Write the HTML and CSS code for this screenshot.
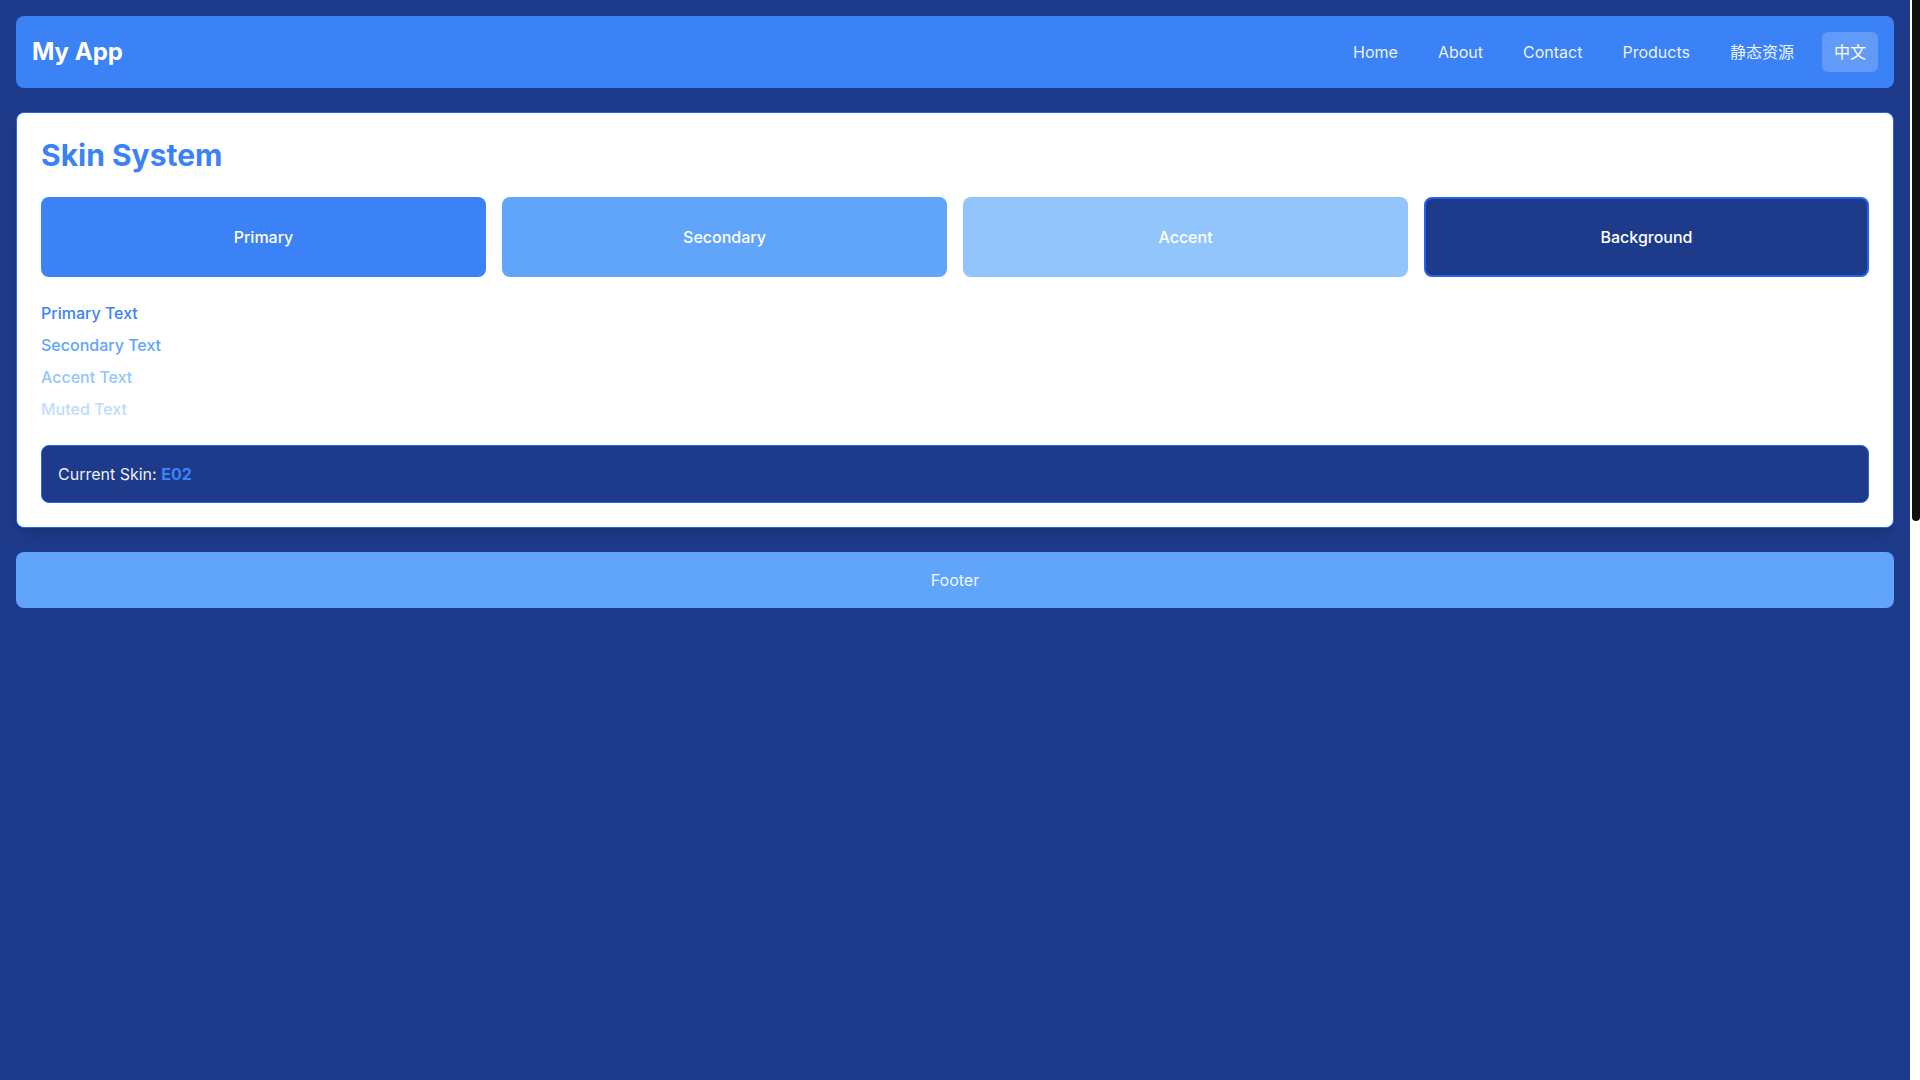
FILE: index.html
```html
<!DOCTYPE html>
<html lang="en">
<head>
<meta charset="utf-8">
<title>My App</title>
<link rel="stylesheet" href="styles.css">
</head>
<body>
<div class="window">
  <div class="page">
    <header class="navbar">
      <div class="brand">My App</div>
      <nav class="nav-links">
        <a class="nav-link" href="#">Home</a>
        <a class="nav-link" href="#">About</a>
        <a class="nav-link" href="#">Contact</a>
        <a class="nav-link" href="#">Products</a>
        <a class="nav-link" href="#">静态资源</a>
        <a class="nav-link active" href="#">中文</a>
      </nav>
    </header>

    <main class="card">
      <h1 class="title">Skin System</h1>
      <div class="swatches">
        <div class="swatch swatch-primary">Primary</div>
        <div class="swatch swatch-secondary">Secondary</div>
        <div class="swatch swatch-accent">Accent</div>
        <div class="swatch swatch-background">Background</div>
      </div>
      <div class="text-samples">
        <p class="sample text-primary">Primary Text</p>
        <p class="sample text-secondary">Secondary Text</p>
        <p class="sample text-accent">Accent Text</p>
        <p class="sample text-muted">Muted Text</p>
      </div>
      <div class="current-skin">Current Skin: <strong class="skin-code">E02</strong></div>
    </main>

    <footer class="footer">Footer</footer>
  </div>
  <div class="scrollbar" aria-hidden="true"><div class="scrollbar-thumb"></div></div>
</div>
</body>
</html>
```

FILE: styles.css
```css
html,
body {
  height: 100%;
}

body {
  margin: 0;
  overflow: hidden;
  background: #1e3a8a;
  font-family: Inter, "Noto Sans CJK SC", "Noto Sans", sans-serif;
  font-size: 16px;
  line-height: 24px;
  color: #ffffff;
}

.window {
  display: flex;
  height: 100vh;
}

.page {
  flex: 1;
  min-width: 0;
  padding: 16px;
}

.scrollbar {
  flex: 0 0 10px;
  display: flex;
  justify-content: flex-end;
  background: #ffffff;
}

.scrollbar-thumb {
  width: 8px;
  height: 521px;
  background: #111111;
  border-radius: 0 0 4px 4px;
}

.navbar {
  display: flex;
  align-items: center;
  justify-content: space-between;
  padding: 16px;
  background: #3b82f6;
  border-radius: 8px;
}

.brand {
  font-size: 24px;
  line-height: 32px;
  font-weight: 700;
  color: #ffffff;
}

.nav-links {
  display: flex;
  gap: 16px;
}

.nav-link {
  padding: 8px 12px;
  border-radius: 6px;
  font-size: 16px;
  line-height: 24px;
  color: rgba(255, 255, 255, 0.92);
  text-decoration: none;
}

.nav-link.active {
  background: rgba(255, 255, 255, 0.2);
  color: #ffffff;
}

.card {
  display: block;
  margin-top: 24px;
  padding: 24px;
  background: #ffffff;
  border: 1px solid #2563eb;
  border-radius: 8px;
  box-shadow: 0 10px 15px -3px rgba(0, 0, 0, 0.1), 0 4px 6px -4px rgba(0, 0, 0, 0.1);
}

.title {
  margin: 0 0 24px;
  font-size: 30px;
  line-height: 36px;
  font-weight: 700;
  color: #3b82f6;
}

.swatches {
  display: grid;
  grid-template-columns: repeat(4, 1fr);
  gap: 16px;
  margin-bottom: 24px;
}

.swatch {
  box-sizing: border-box;
  display: flex;
  align-items: center;
  justify-content: center;
  height: 80px;
  border-radius: 8px;
  font-weight: 500;
  color: #ffffff;
}

.swatch-primary { background: #3b82f6; }
.swatch-secondary { background: #60a5fa; }
.swatch-accent { background: #93c5fd; }
.swatch-background {
  background: #1e3a8a;
  border: 2px solid #2563eb;
}

.text-samples {
  display: flex;
  flex-direction: column;
  gap: 8px;
  margin-bottom: 24px;
}

.sample {
  margin: 0;
  font-weight: 500;
}

.text-primary { color: #3b82f6; }
.text-secondary { color: #60a5fa; }
.text-accent { color: #93c5fd; }
.text-muted { color: #bfdbfe; }

.current-skin {
  padding: 16px;
  background: #1e3a8a;
  border: 1px solid #2563eb;
  border-radius: 8px;
  color: rgba(255, 255, 255, 0.95);
}

.skin-code {
  font-weight: 700;
  color: #3b82f6;
}

.footer {
  margin-top: 24px;
  padding: 16px;
  background: #60a5fa;
  border-radius: 8px;
  text-align: center;
  color: rgba(255, 255, 255, 0.95);
}
```
